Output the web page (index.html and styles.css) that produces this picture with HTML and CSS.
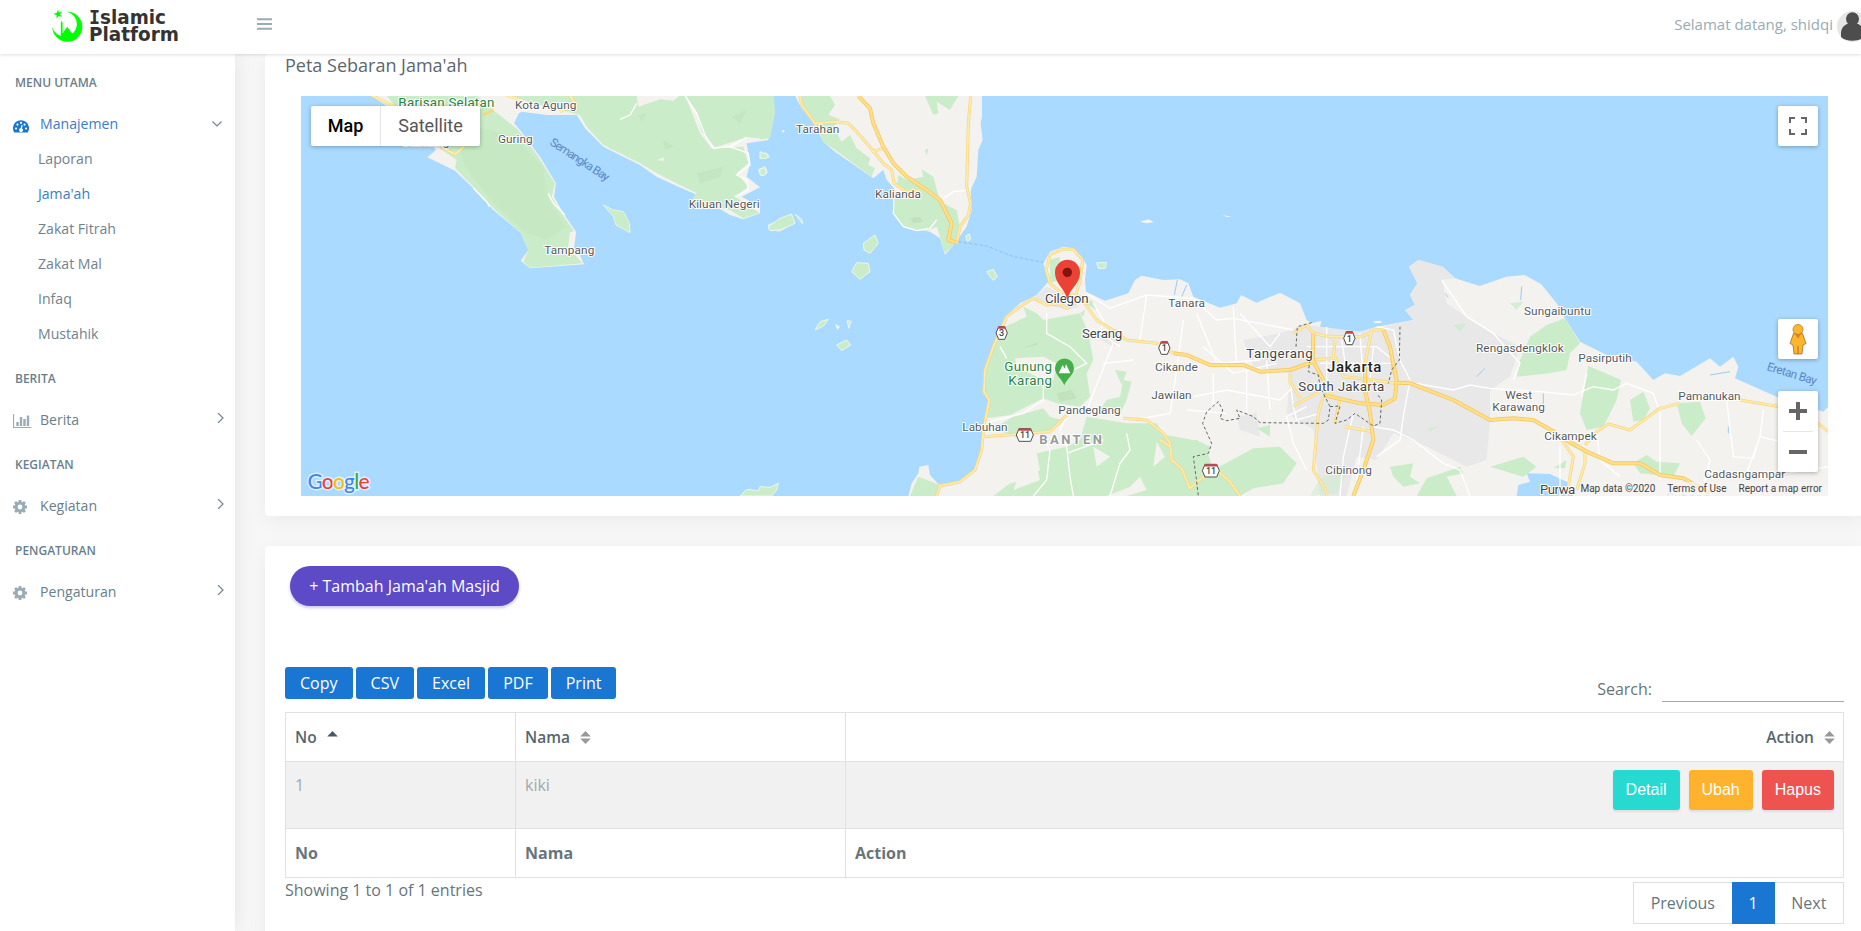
FILE: index.html
```html
<!DOCTYPE html>
<html lang="id">
<head>
<meta charset="utf-8">
<title>Islamic Platform</title>
<link rel="stylesheet" href="styles.css">
</head>
<body>
<header class="topbar">
  <svg class="logo" width="136" height="40" viewBox="0 0 136 40">
    <g fill="#0f0">
      <path d="M16 3.800A15 15 0 1 1 1.300 19A12.500 12.500 0 1 0 16 3.800Z"/>
      <path d="M9.800 28V15L10.700 12.500L11.600 15V25.500L13 23.500C13.500 21.500 15.500 21 16.200 18.500C17 21 19 21.500 19.500 23.500L22 26V31H9.800Z"/>
      <path d="M7 1.500L8 4.500L11.200 3.800L9 6.200L11 9L7.800 8L5.500 10.500L5.600 7.200L2.500 5.800L5.800 4.800Z"/>
    </g>
    <g class="logo-text">
      <text x="38" y="16.200" textLength="77" lengthAdjust="spacingAndGlyphs"><tspan class="logo-i">I</tspan>slamic</text>
      <text x="38" y="32.500" textLength="90" lengthAdjust="spacingAndGlyphs">Platform</text>
    </g>
  </svg>
  <svg class="burger" width="15" height="12" viewBox="0 0 15 12"><path d="M0 1.200H15M0 6H15M0 10.800H15" stroke="#99abb4" stroke-width="1.900"/></svg>
  <span class="welcome">Selamat datang, shidqi</span>
  <svg class="avatar" width="31" height="31" viewBox="0 0 31 31"><circle cx="15.500" cy="15.500" r="15.500" fill="#e6e6e6"/><path d="M4 23C4 17 7 14 11 12.500A6.500 6.500 0 1 1 20 12.500C24 14 27 17 27 23V26C22 31 9 31 4 26Z" fill="#4d4d4d"/></svg>
</header>
<div class="page">
  <nav class="sidebar">
    <h3 class="cap">MENU UTAMA</h3>
    <a class="item active">
      <svg class="ico" width="19" height="14" viewBox="0 0 19 14"><path d="M1.300 13.500A8 8 0 1 1 14.700 13.500Z" fill="#1976d2"/><g fill="#fff"><circle cx="3" cy="9.500" r="1.100"/><circle cx="4.500" cy="5.600" r="1.100"/><circle cx="8" cy="3.800" r="1.100"/><circle cx="11.600" cy="5.600" r="1.100"/><circle cx="13" cy="9.500" r="1.100"/><path d="M8.700 5.800L9.700 6.100L9 9.400A1.900 1.900 0 1 1 7.600 9.200Z"/></g></svg>
      <span>Manajemen</span>
      <svg class="arrow" width="10" height="10" viewBox="0 0 10 10"><path d="M.5 2.500L5 7L9.500 2.500" fill="none" stroke="#728792" stroke-width="1.200"/></svg>
    </a>
    <a class="sub">Laporan</a>
    <a class="sub active">Jama'ah</a>
    <a class="sub">Zakat Fitrah</a>
    <a class="sub">Zakat Mal</a>
    <a class="sub">Infaq</a>
    <a class="sub">Mustahik</a>
    <h3 class="cap cap-gap">BERITA</h3>
    <a class="item">
      <svg class="ico" width="19" height="14" viewBox="0 0 19 14"><path d="M.5 0V13.500H18.500" fill="none" stroke="#99abb4" stroke-width="1.200"/><path d="M4.500 12V8M8 12V3M11.500 12V5M15 12V1.500" stroke="#99abb4" stroke-width="2.400"/></svg>
      <span>Berita</span>
      <svg class="arrow" width="10" height="10" viewBox="0 0 10 10"><path d="M4 0L9 5L4 10" fill="none" stroke="#728792" stroke-width="1.200"/></svg>
    </a>
    <h3 class="cap">KEGIATAN</h3>
    <a class="item">
      <svg class="ico" width="19" height="14" viewBox="0 0 19 14"><g stroke="#99abb4"><circle cx="7" cy="7" r="3.900" fill="none" stroke-width="3"/><path d="M7 0V3M7 11V14M0 7H3M11 7H14M2.050 2.050L4 4M10 10L11.950 11.950M2.050 11.950L4 10M10 4L11.950 2.050" stroke-width="2.800"/></g></svg>
      <span>Kegiatan</span>
      <svg class="arrow" width="10" height="10" viewBox="0 0 10 10"><path d="M4 0L9 5L4 10" fill="none" stroke="#728792" stroke-width="1.200"/></svg>
    </a>
    <h3 class="cap">PENGATURAN</h3>
    <a class="item">
      <svg class="ico" width="19" height="14" viewBox="0 0 19 14"><g stroke="#99abb4"><circle cx="7" cy="7" r="3.900" fill="none" stroke-width="3"/><path d="M7 0V3M7 11V14M0 7H3M11 7H14M2.050 2.050L4 4M10 10L11.950 11.950M2.050 11.950L4 10M10 4L11.950 2.050" stroke-width="2.800"/></g></svg>
      <span>Pengaturan</span>
      <svg class="arrow" width="10" height="10" viewBox="0 0 10 10"><path d="M4 0L9 5L4 10" fill="none" stroke="#728792" stroke-width="1.200"/></svg>
    </a>
  </nav>
  <main class="content">
    <section class="card map-card">
      <h4 class="title">Peta Sebaran Jama'ah</h4>
      <div class="map">
        <svg class="map-canvas" width="1527" height="400" viewBox="-1377 48 4581 1200">
          <defs>
            <g id="roads">
              <path d="M120 48L125 75L165 130L225 125L265 130L290 155L320 190L370 250L395 270L402 310L440 335L480 330M335 215L370 205"/>
              <path d="M632 48L625 130L622 240L620 320L632 370L625 405L600 440L590 490"/>
              <path d="M945 650L960 605L968 540L940 508H905L870 525L858 570L870 610L900 635L960 650L1010 720L1050 745L1100 780L1190 790L1240 820L1280 825L1350 855L1450 855L1500 875L1590 870L1660 845"/>
              <path d="M820 655L860 675L900 672L920 685L960 660M820 655L780 680L740 710L700 800L675 870L672 935L688 960L670 1050L665 1110L645 1170L600 1205L540 1218L530 1248M670 1070L740 1065L870 1055L920 1005M1090 1015L1160 1020L1210 1060L1230 1090L1235 1140L1265 1165L1290 1225L1330 1190L1370 1170L1410 1205L1440 1248"/>
              <path d="M1600 760L1640 735L1660 760L1710 770H1800L1830 760L1835 750H1870L1890 800L1900 870L1910 900L1905 955L1870 975L1800 970L1690 945M1660 760L1658 840L1690 900L1720 950M1660 840L1720 835L1725 780M1725 830L1750 890L1840 900L1905 910L1945 908L2080 960L2190 1020L2260 1015L2320 1020L2390 1060L2430 1090L2480 1115L2560 1150L2640 1150L2700 1185L2770 1195L2850 1240M1835 750L1815 850V930L1830 1000L1840 1080L1810 1170L1780 1248M1590 880L1590 905L1620 955M1600 978L1680 935M1740 955L1725 1030M1755 1040L1840 1055M1690 950L1675 1000L1670 1060L1660 1170L1700 1235V1248"/>
              <path d="M2395 1065L2440 1130L2420 1248M2475 1110V1150L2450 1230M2475 1095L2510 1055L2545 1032L2610 1050L2700 985L2760 970M2940 960L3060 980L3100 1000M3150 1010L3205 1055M1200 1080L1230 1100"/>
            </g>
            <path id="highway" d="M295 48L330 85L340 130L370 200L400 250L440 290L500 330L540 360L575 430L565 480L590 488"/>
            <path id="tollway" d="M1815 850V930L1830 1000L1840 1080L1810 1170L1780 1248M1905 955L1910 900L1890 800L1870 750M1905 910L1945 908L2080 960L2190 1020L2260 1015L2320 1020L2390 1060M1240 820L1280 825L1350 855L1450 855L1500 875L1590 870L1660 845M1690 945L1800 970L1870 975L1905 955M1660 760L1658 840L1690 900M2395 1065L2480 1115L2560 1150L2640 1150L2700 1185L2770 1195L2850 1240"/>
          </defs>
          <rect x="-1377" y="48" width="4581" height="1200" fill="#aadaff"/>
          <!-- western peninsulas -->
          <g transform="translate(-1440 -90)">
            <path fill="#f3f2ef" d="M270 136L340 180L440 260L468 300L442 322L525 362L580 415L640 480L722 548L745 600L722 632L750 655L912 643L900 615L878 590L888 545L850 490L822 440L828 400L780 320L720 240L690 205L725 185L800 195L890 195L915 235L970 290L1080 345L1130 380L1195 410L1240 430L1350 495L1390 508L1440 490L1440 470L1385 440L1440 412L1400 380L1410 340L1400 280L1465 270L1480 136Z"/>
            <path fill="#cbecc9" d="M320 136L360 190L470 260L480 295L530 330L525 355L580 410L640 475L722 548L745 600L730 635L750 653L908 640L880 610L865 585L880 540L845 490L815 440L825 400L775 320L715 240L640 180L590 136ZM690 136L760 160L900 195L920 230L970 285L1080 340L1140 375L1200 405L1250 430L1230 455L1350 480L1390 505L1438 488L1365 440L1405 410L1370 370L1405 340L1390 290L1295 295L1260 250L1215 136Z"/>
            <path fill="#c3e7c0" d="M570 225L700 260L790 350L800 440L860 530L800 570L740 550L640 460L555 350L540 300ZM600 375L650 395L655 445L620 430Z" opacity=".6"/>
            <path fill="#cbecc9" d="M1215 136H1480L1475 225L1440 265L1400 262L1350 278L1305 292L1265 245L1250 190Z"/>
            <path fill="#f3f2ef" d="M1070 136H1200L1180 152L1140 148L1075 170ZM650 136H690L722 178L700 225L640 180ZM1130 330L1152 322L1150 333ZM865 590L870 545L888 548L882 595Z"/>
            <path fill="#bfe0bb" d="M1075 195L1100 190L1085 215ZM1250 370L1330 350L1320 380L1260 400ZM1150 270L1180 290L1155 300ZM1355 200L1400 180L1380 220Z" opacity=".5"/>
            <g fill="#cbecc9" stroke="#e7f5e4" stroke-width="3"><path d="M970 465L1000 480L1030 485L1048 520L1050 548L1008 525L1000 500Z"/><path d="M1465 525L1535 498L1540 520L1500 543L1468 540Z"/><path d="M1435 360L1455 350L1462 368L1445 378Z"/><path d="M1442 315L1458 308L1468 322Z"/></g>
            <path fill="none" stroke="#fff" stroke-width="4" d="M1215 136L1250 190L1275 255L1300 295L1350 290L1400 262M1070 160L1050 195L1020 208M1350 290L1405 310L1410 345L1370 375L1400 390L1405 420L1365 440M580 415L620 455L628 470M805 430L820 460L855 495"/>
            <g fill="none" stroke="#f6d77a" stroke-width="9"><path d="M275 136L340 168L440 240L490 295L525 312L552 290M680 136L730 152M870 136L885 160L840 185M610 195L640 180"/></g>
            <g fill="none" stroke="#fff0b5" stroke-width="5"><path d="M275 136L340 168L440 240L490 295L525 312L552 290M680 136L730 152M870 136L885 160L840 185"/></g>
          </g>
          <!-- Lampung -->
          <path fill="#f3f2ef" d="M105 48L125 85L160 130L190 185L225 215L340 295L370 270L380 300L402 325L410 350L402 400L430 440L510 455L540 475L555 525L585 490L620 440L635 390L632 330L650 290L655 210L668 180L662 130L666 110V48Z"/>
          <path fill="#cbecc9" d="M115 48L130 80L165 130L190 185L230 213L335 290L345 265L325 255L330 235L290 205L270 165L245 185L220 140L240 118L205 105L225 75L210 48ZM405 355L400 400L430 440L500 452L530 440L540 470L555 520L590 485L600 440L590 390L540 365L520 290L485 268L490 290L440 300L415 285L410 320L440 330ZM495 48L520 105L535 100L530 65L570 90L595 48ZM495 210L505 205L500 228Z"/>
          <path fill="none" stroke="#fff" stroke-width="4" d="M402 355L400 400L430 440L470 452L510 445L530 420M550 355L580 335L632 330"/>
          <!-- islands -->
          <g fill="#cbecc9" stroke="#ecf7ea" stroke-width="3">
            <path d="M0 48H42L45 100L30 175L0 178Z" stroke="none"/><path d="M0 215L25 225L20 235H0ZM0 265L20 268L15 285H0Z"/>
            <path d="M25 440L60 415L95 402L105 430L60 450L30 452Z"/><path d="M105 402L125 418L128 432Z"/><path d="M310 490L345 465L355 490L330 520L312 510Z"/><path d="M275 575L290 548L325 550L330 575L300 598Z"/><path d="M680 575L700 568L712 590L700 602Z"/><path d="M165 750L180 725L205 718L190 738Z"/><path d="M230 795L260 780L272 795L245 812Z"/><path d="M262 722L274 724L266 745Z"/><path d="M1010 548L1040 548L1035 565L1015 565Z"/><path d="M617 468L628 462L632 478L622 484Z"/>
            <path d="M-60 1248L-40 1228L-5 1232L0 1220L30 1222L55 1210L50 1230L35 1248Z"/>
          </g>
          <path fill="#f7f6f3" d="M1140 425L1165 418L1182 426L1160 430ZM1388 405L1415 410L1400 411ZM225 732L240 740L232 750ZM65 150L76 153L68 158ZM1840 724L1862 722L1865 728L1845 730Z"/>
          <!-- Java -->
          <path fill="#f3f2ef" d="M445 1248L455 1210L475 1180L478 1160L505 1155L510 1185L535 1213L600 1205L640 1175L662 1130L668 1050L685 960L668 940L672 870L700 800L735 710L780 670L830 645L865 605L850 550L870 515L910 500L940 505L965 530L980 555L975 600L978 635L1035 662L1105 640L1125 600L1145 587L1210 600L1260 598L1285 610L1300 650L1380 683L1430 670L1443 645L1490 668L1560 638L1620 670L1640 720L1655 730L1685 722L1680 740L1730 750L1800 755L1850 740L1960 720L1935 690L1965 675L1950 645L1972 610L1947 560L1975 540L2048 560L2085 595L2159 618L2239 590L2294 585L2343 612L2390 670L2415 715L2460 785L2540 825L2630 845L2680 900L2715 880L2760 888L2850 835L2880 860L2920 830L2935 860L2925 895L3050 950L3190 995L3205 980V1250H445Z"/>
          <g fill="#e8e8e8">
            <path d="M1947 560L1975 540L2048 560L2085 595L2045 600L2060 670L2120 710L2200 760L2280 800L2250 890L2190 930L2190 1020L2180 1140L2120 1160L1980 1090L1900 1060L1850 1140L1790 1130L1760 1248H1680L1660 1050L1580 1000L1590 880L1480 860L1450 780L1560 760L1640 735L1800 755L1960 720L1935 690L1965 675L1950 645L1972 610Z"/>
            <path d="M825 650L860 620L900 640L960 680L920 690L840 670ZM1005 770L1070 745L1090 780L1060 800ZM1430 1010L1490 1000L1500 1070L1440 1050Z"/>
          </g>
          <path fill="#cbecc9" d="M735 740L800 710L790 680L830 700L850 720L960 700L985 760L1000 840L980 880L990 950L960 980L890 970L850 955L750 1005L680 1015L690 960L672 930L680 860L710 780ZM870 540L900 530L895 600L870 610ZM975 670L995 660L1010 690ZM1065 870L1100 875L1085 915ZM1090 900L1115 905L1100 960L1080 1000L1020 990L1040 960L1080 950ZM450 1248L475 1190L540 1215L530 1248ZM700 1045L760 1010L850 985L870 1010L905 1020L870 1055L830 1055L790 1080ZM980 1010L1100 1030L1190 1030L1220 1080L1310 1080L1350 1100L1330 1200L1400 1248H700L750 1210L800 1200L840 1170L830 1120L920 1100L960 1080ZM1190 1060L1300 1080L1340 1110L1360 1170L1480 1105L1560 1100L1610 1150L1570 1210L1480 1225L1440 1248H1300Z"/>
          <path fill="#f3f2ef" d="M765 835L850 830L890 850L880 900L830 890L770 860ZM1190 1085L1215 1130L1180 1160ZM780 1180L830 1160L840 1200L760 1230ZM1140 1190L1160 1230L1100 1248H1040L1110 1220ZM1000 1100L1050 1130L1010 1160Z"/>
          <path fill="#bcdcb7" opacity=".6" d="M790 805L835 785L830 795ZM450 415L480 410L490 425L460 430ZM890 940L935 930L950 955L900 965ZM960 700L975 690L970 710Z"/>
          <g fill="#cbecc9">
            <path d="M2280 840L2310 770L2360 735L2415 715L2460 790L2430 820L2420 870L2370 880L2270 890Z"/>
            <path d="M2485 858L2550 885L2583 900L2570 960L2530 1040L2480 1050L2460 1000Z"/><path d="M2610 960L2650 935L2670 985L2650 1020L2620 1025Z"/><path d="M2750 970L2820 965L2837 1015L2795 1068L2765 1030Z"/>
            <path d="M1890 1160L1960 1150L1950 1190L1980 1210L1930 1220L1900 1190ZM2620 1150L2660 1125L2690 1145L2760 1150L2740 1190L2640 1180ZM2000 1195L2100 1160L2110 1180L2060 1190L2090 1248H1970ZM2380 1165L2420 1140L2415 1165ZM2190 1160L2290 1130L2330 1160L2290 1190ZM1490 1045L1530 1035L1530 1070Z"/>
            <path d="M2080 735L2120 730L2100 755ZM2250 670L2290 665L2270 690ZM2005 1045L2030 1040L2010 1055Z" opacity=".8"/>
            <path d="M1680 1195L1720 1180L1770 1160L1730 1240L1650 1248Z" opacity=".5"/>
          </g>
          <path fill="#aadaff" d="M2300 1180L2370 1182L2420 1205L2440 1248H2270L2275 1215L2310 1205Z"/>
          <path fill="none" stroke="#9bcbf2" stroke-width="3" d="M1243 645L1252 600M1265 650L1280 615M2285 620L2282 660M2150 890L2175 865M2350 940V980M2905 1040V1060M2850 885L2910 875M2055 640L2065 652"/>
          <!-- minor roads -->
          <g fill="none" stroke="#fff" stroke-width="4">
            <path d="M980 640L1050 685L1160 645L1300 655L1370 720L1420 715L1600 750M1160 645L1140 780M1270 720L1250 870L1230 1000L1120 1020M1310 700L1370 850L1500 840M1420 680L1430 860M1440 700L1530 800L1560 760M1060 790L1000 940L980 990M1120 840L1030 850M860 700V760L930 800L980 850L920 880M720 800L740 835M690 1025L790 1000L850 960V900M930 990L900 1050L920 1100L930 1190L940 1248M1100 1060L1110 1110L1080 1150L1050 1248M850 1070L870 1110L860 1200L820 1248M920 1120L1030 1080M1000 670L1030 720L1020 760L1080 800"/>
            <path d="M1330 800L1420 880L1550 850M1300 950L1400 930L1560 960L1600 920M1360 880V980M1460 870V1000M1520 840L1530 990M1280 990L1400 1000M1590 900L1600 980L1610 1020L1680 1000M1640 800H1850L1900 840M1680 850H1900M1700 740V900M1745 780L1760 880M1800 760L1810 900M1840 800L1830 900M1640 980L1580 1010L1600 1090L1640 1170M1740 1248L1750 1130L1780 1000M1790 1200L1810 1040M1850 740L1900 750L1920 840L1950 900L1930 1010L1920 1080L1850 1130M1970 910L2080 930L2130 915L2190 925L2340 935L2440 945L2500 920L2560 930L2600 910L2680 940L2700 1000L2700 1200M1840 1040L1900 1050L1960 1080L2050 1150L2100 1170L2130 1248M2045 600L2120 710L2200 760L2280 850L2260 900M2480 880L2465 950M2900 960L2920 1130L2980 1135L3000 1070L3060 1085M3010 990L3000 1070L2960 1180L3020 1190L3205 1160M2810 1080L2850 1140L2830 1220M2400 1100V1248M2510 1060L2520 1140L2580 1190"/>
          </g>
          <!-- major roads -->
          <use href="#roads" class="road-edge"/>
          <use href="#roads" class="road-core"/>
          <use href="#tollway" class="toll-edge"/>
          <use href="#tollway" class="toll-core"/>
          <use href="#highway" class="toll-edge"/>
          <use href="#highway" class="toll-core"/>
          <!-- boundaries and ferry -->
          <path fill="none" stroke="#8bb8e0" stroke-width="2.500" stroke-dasharray="10 6" d="M595 485L680 498L760 530L850 547"/>
          <path fill="none" stroke="#666" stroke-width="3" stroke-dasharray="9 7" d="M1655 728L1612 740L1608 800M1650 840L1645 875L1675 885L1680 920L1700 960L1710 980L1705 1020L1690 1030L1500 1028L1480 1010L1430 990L1440 1015L1400 1022L1380 1015L1388 990L1375 965L1340 995L1328 1030L1355 1090L1345 1120L1300 1130L1308 1190L1315 1248M1710 980L1740 978L1725 1030L1760 1020L1785 1000L1840 1038L1860 1030L1865 960L1850 940M1920 740L1918 840L1895 870L1885 910"/>
          <!-- shields -->
          <g stroke="#4f4f4f" stroke-width="3" fill="#fff">
            <path d="M716 740H734L742 759L734 778H716L708 759Z"/><path d="M1204 785H1222L1230 804L1222 823H1204L1196 804Z"/><path d="M1759 755H1777L1785 775L1777 794H1759L1751 775Z"/><path d="M777 1046H812L820 1065L812 1084H777L769 1065Z"/><path d="M1335 1153H1370L1378 1172L1370 1191H1335L1327 1172Z"/>
          </g>
          <path stroke="#c5474c" stroke-width="7" d="M714 743H736M1202 788H1224M1757 758H1779M775 1049H814M1333 1156H1372"/>
          <g class="shield-num"><text x="725" y="769">3</text><text x="1213" y="814">1</text><text x="1768" y="785">1</text><text x="795" y="1075">11</text><text x="1353" y="1182">11</text></g>
          <!-- Gunung Karang pin -->
          <path fill="#45b049" d="M913 916C905 895 885 885 885 864A28 28 0 0 1 942 864C942 885 921 895 913 916Z"/><path fill="#fff" d="M896 880L908 855L914 866L918 852L931 880Z"/>
          <!-- place names -->
          <g class="labels">
            <text class="park" x="-1085" y="82" textLength="288">Barisan Selatan</text>
            <text x="-1072" y="198" textLength="140">Belimbing</text>
            <text x="-735" y="88" textLength="184">Kota Agung</text>
            <text x="-786" y="189" textLength="104">Guring</text>
            <text x="-647" y="522" textLength="150">Tampang</text>
            <text x="-214" y="384" textLength="213">Kiluan Negeri</text>
            <text x="108" y="159" textLength="130">Tarahan</text>
            <text x="345" y="355" textLength="138">Kalianda</text>
            <text class="town" x="855" y="668" textLength="131">Cilegon</text>
            <text x="1225" y="682" textLength="110">Tanara</text>
            <text class="town" x="966" y="773" textLength="121">Serang</text>
            <text x="1185" y="874" textLength="128">Cikande</text>
            <text x="1174" y="957" textLength="121">Jawilan</text>
            <text x="895" y="1003" textLength="187">Pandeglang</text>
            <text x="607" y="1054" textLength="136">Labuhan</text>
            <text class="province" x="838" y="1092" textLength="188">BANTEN</text>
            <text class="park" x="733" y="874" textLength="143">Gunung</text>
            <text class="park" x="745" y="916" textLength="131">Karang</text>
            <text class="town" x="1459" y="834" textLength="199">Tangerang</text>
            <text class="city" x="1701" y="877" textLength="163">Jakarta</text>
            <text class="town" x="1615" y="933" textLength="258">South Jakarta</text>
            <text x="1696" y="1183" textLength="140">Cibinong</text>
            <text x="2292" y="705" textLength="200">Sungaibuntu</text>
            <text x="2148" y="816" textLength="263">Rengasdengklok</text>
            <text x="2455" y="846" textLength="160">Pasirputih</text>
            <text x="2236" y="957" textLength="80">West</text>
            <text x="2197" y="994" textLength="158">Karawang</text>
            <text x="2353" y="1081" textLength="157">Cikampek</text>
            <text x="2755" y="960" textLength="187">Pamanukan</text>
            <text x="2833" y="1195" textLength="243">Cadasngampar</text>
            <text class="faint" x="2720" y="1262" textLength="130">Subang</text>
            <text class="sea" textLength="205" transform="translate(-633 193) rotate(33)">Semangka Bay</text>
            <text class="sea" textLength="154" transform="translate(3019 870) rotate(17)">Eretan Bay</text>
            <text class="town" x="2340" y="1241" textLength="106">Purwa</text>
          </g>
          <!-- selected location -->
          <path fill="#ea4335" d="M922 662C917 625 885 615 885 577A37.500 37.500 0 0 1 960 577C960 615 927 625 922 662Z"/><circle cx="922" cy="577" r="14" fill="#811411"/>
        </svg>
        <div class="map-type"><span class="on">Map</span><span>Satellite</span></div>
        <div class="ctl full"><svg width="18" height="18" viewBox="0 0 18 18"><path d="M1 6V1H6M12 1H17V6M17 12V17H12M6 17H1V12" fill="none" stroke="#666" stroke-width="2"/></svg></div>
        <div class="ctl pegman"><svg width="18" height="32" viewBox="0 0 18 32"><path d="M4.500 10.500H13.500L17 20.500L14 22L13 31H5L4 22L1 20.500Z" fill="#fbb72a" stroke="#a86a2d" stroke-width=".8"/><path d="M9 23V31" stroke="#a86a2d" stroke-width=".9"/><path d="M5.500 10.500H12.500L9 15.500Z" fill="#e8792d"/><circle cx="9" cy="6.500" r="5" fill="#fbb72a" stroke="#b77a2d" stroke-width=".8"/></svg></div>
        <div class="ctl zoom"><svg width="40" height="81" viewBox="0 0 40 81"><path d="M11 20H29M20 11V29M11 61H29" stroke="#666" stroke-width="4"/><path d="M5 40.500H35" stroke="#e6e6e6"/></svg></div>
        <svg class="google" width="70" height="32" viewBox="0 0 70 32"><text x="2.500" y="24.500" textLength="62"><tspan fill="#4285f4">G</tspan><tspan fill="#e94235">o</tspan><tspan fill="#fabb05">o</tspan><tspan fill="#4285f4">g</tspan><tspan fill="#34a853">l</tspan><tspan fill="#e94235">e</tspan></text></svg>
        <div class="legal"><span>Map data ©2020</span><span>Terms of Use</span><span>Report a map error</span></div>
      </div>
    </section>
    <section class="card">
      <a class="add">+ Tambah Jama'ah Masjid</a>
      <div class="tools">
        <div class="exports"><button>Copy</button><button>CSV</button><button>Excel</button><button>PDF</button><button>Print</button></div>
        <label class="search">Search:<input type="text"></label>
      </div>
      <table class="grid">
        <colgroup><col class="c-no"><col class="c-nama"><col></colgroup>
        <thead><tr>
          <th>No <svg class="sort" width="11" height="15" viewBox="0 0 11 15"><path d="M.2 6.500L5.500 1L10.800 6.500Z" fill="#455a64"/></svg></th>
          <th>Nama <svg class="sort" width="11" height="15" viewBox="0 0 11 15"><path d="M.2 6.500L5.500 1L10.800 6.500ZM.2 8.500L5.500 14L10.800 8.500Z" fill="#999"/></svg></th>
          <th class="right">Action <svg class="sort" width="11" height="15" viewBox="0 0 11 15"><path d="M.2 6.500L5.500 1L10.800 6.500ZM.2 8.500L5.500 14L10.800 8.500Z" fill="#999"/></svg></th>
        </tr></thead>
        <tbody><tr><td>1</td><td>kiki</td><td><div class="actions"><button class="info">Detail</button><button class="warn">Ubah</button><button class="danger">Hapus</button></div></td></tr></tbody>
        <tfoot><tr><th>No</th><th>Nama</th><th>Action</th></tr></tfoot>
      </table>
      <div class="foot">
        <span class="count">Showing 1 to 1 of 1 entries</span>
        <div class="pager"><a>Previous</a><a class="on">1</a><a>Next</a></div>
      </div>
    </section>
  </main>
</div>
</body>
</html>
```
FILE: styles.css
```css
* { box-sizing: border-box; }
html, body { margin: 0; height: 931px; overflow: hidden; }
body { width: 1861px; font-family: "Open Sans", sans-serif; font-size: 16px; line-height: 24px; color: #67757c; background: #fff; }

.topbar { position: relative; z-index: 5; display: flex; height: 54px; background: #fff; box-shadow: 0 1px 3px rgba(0, 0, 0, .13); }
.logo { flex: none; margin: 8px 0 0 51px; }
.logo-text { font: bold 18.8px "DejaVu Sans", sans-serif; fill: #333; }
.logo-i { font-family: "DejaVu Sans Mono", monospace; }
.burger { flex: none; margin: 18px 0 0 70px; }
.welcome { margin: 12px 4px 0 auto; font-size: 15px; color: #99abb4; white-space: nowrap; }
.avatar { flex: none; margin: 11px -7px 0 0; }

.page { display: flex; height: 877px; }
.sidebar { position: relative; z-index: 2; flex: none; width: 235px; padding-top: 7px; background: #fff; box-shadow: 1px 0 20px rgba(0, 0, 0, .08); }
.cap { margin: 0; padding: 10px 15px 0; height: 40px; font-size: 12px; font-weight: 600; color: #687f8b; }
.cap-gap { margin-top: 6px; }
.item { display: flex; align-items: center; height: 46px; padding: 0 11px 1px 13px; font-size: 14.1px; color: #687f8b; }
.item span { margin-left: 8px; }
.item .ico { margin-top: 3px; }
.item .arrow { margin: -4px 0 0 auto; }
.item.active, .sub.active { color: #3b7cc9; }
.item.active { height: 41px; padding-bottom: 0; margin-top: 2px; margin-bottom: -3px; }
.item.active .arrow { margin: 0 2px 0 auto; }
.item.active .ico { margin-top: 4px; }
.sub { display: block; height: 35px; padding-left: 38px; line-height: 35px; font-size: 14.1px; color: #70838e; }

.content { flex: 1; min-width: 0; overflow: hidden; padding-left: 30px; background: #f7f7f7; }
.card { width: 1599px; padding: 20px 20px 0; background: #fff; border-radius: 4px; box-shadow: 0 5px 20px rgba(0, 0, 0, .05); }
.card + .card { height: 420px; margin-top: 30px; }
.map-card { height: 462px; padding-top: 0; }
.title { margin: 0; height: 42px; font-size: 18px; font-weight: 400; line-height: 22px; color: #5b6870; }
.map { position: relative; width: 1527px; height: 400px; margin-left: 16px; overflow: hidden; font-family: Roboto, sans-serif; }
.map-canvas { display: block; }
.road-edge, .road-core, .toll-edge, .toll-core { fill: none; stroke-linejoin: round; }
.road-edge { stroke: #f5d484; stroke-width: 9; }
.road-core { stroke: #ffeca8; stroke-width: 5; }
.toll-edge { stroke: #f6c862; stroke-width: 12; }
.toll-core { stroke: #ffe08a; stroke-width: 7; }
.labels text { font-size: 35.5px; fill: #555a5e; stroke: #fff; stroke-width: 6px; stroke-linejoin: round; paint-order: stroke; }
.labels .town { font-size: 40px; fill: #444; }
.labels .city { font-size: 45px; font-weight: 500; fill: #222; }
.labels .park { font-size: 40px; fill: #2b8248; }
.labels .province { font-size: 39px; font-weight: 700; fill: #999; }
.labels .sea { fill: #5c86c5; stroke: none; }
.labels .faint { fill: #aaa; }
.shield-num { font-size: 27px; font-weight: 500; fill: #444; text-anchor: middle; }
.map-type { position: absolute; left: 10px; top: 10px; display: flex; height: 40px; background: #fff; border-radius: 2px; box-shadow: 0 1px 4px rgba(0, 0, 0, .3); font-size: 18px; line-height: 40px; color: #565656; }
.map-type span { width: 99px; text-align: center; }
.map-type .on { width: 70px; border-right: 1px solid #e6e6e6; color: #000; font-weight: 500; }
.ctl { position: absolute; right: 10px; display: flex; align-items: center; justify-content: center; width: 40px; height: 40px; background: #fff; border-radius: 2px; box-shadow: 0 1px 4px rgba(0, 0, 0, .3); }
.full { top: 10px; }
.pegman { top: 223px; }
.zoom { top: 295px; height: 81px; }
.google { position: absolute; left: 4px; bottom: 0; }
.google text { font: 500 21px Lato, sans-serif; stroke: #fff; stroke-opacity: .65; stroke-width: 3px; paint-order: stroke; }
.legal { position: absolute; right: 0; bottom: 0; display: flex; height: 14px; font-size: 10px; line-height: 14px; color: #444; background: rgba(245, 245, 245, .7); }
.legal span { padding: 0 6px; white-space: nowrap; }
.legal span:first-child { padding-left: 0; }

.add { display: block; width: 229px; height: 40px; margin-left: 5px; border-radius: 20px; background: #5c4ac7; color: #fff; text-align: center; line-height: 40px; box-shadow: 0 2px 3px rgba(92, 74, 199, .3); }
.tools { display: flex; justify-content: space-between; height: 106px; padding-top: 61px; }
.exports { display: flex; gap: 3.1px; }
.exports button { height: 32px; padding: 0 15px; border: 0; border-radius: 3px; background: #1976d2; color: #fff; font: 16px "Open Sans", sans-serif; }
.search { display: flex; height: 35px; line-height: 44px; }
.search input { width: 182px; height: 35px; margin-left: 10px; border: 0; border-bottom: 1px solid #a5a9ac; background: none; }
.grid { width: 1559px; table-layout: fixed; border-collapse: collapse; }
.c-no { width: 230px; }
.c-nama { width: 330px; }
.grid th, .grid td { padding: 0 9px; border: 1px solid #dee2e6; text-align: left; }
.grid th { height: 49px; font-weight: 700; }
.grid thead th { font-size: 15.5px; font-weight: 600; color: #55666f; }
.grid .right { text-align: right; padding-right: 8px; }
.grid td { height: 67px; padding-top: 8px; vertical-align: top; background: #f1f1f1; color: #a0a9af; line-height: 30px; }
.sort { margin-left: 6px; vertical-align: -2px; }
.actions { display: flex; justify-content: flex-end; gap: 9px; }
.actions button { height: 40px; padding: 0 13px; border: 0; border-radius: 3px; color: #fff; font: 16px "Liberation Sans", sans-serif; box-shadow: 0 2px 2px rgba(0, 0, 0, .08); }
.actions .info { background: #26dad2; }
.actions .warn { background: #ffb22b; }
.actions .danger { background: #ef5350; }
.foot { display: flex; justify-content: space-between; }
.pager { display: flex; height: 42px; margin-top: 4px; border: 1px solid #dadfe2; line-height: 40px; }
.pager a { padding: 0 16.6px; }
.pager .on { margin: -1px 0; padding: 1px 17px; background: #1976d2; color: #fff; }
```
